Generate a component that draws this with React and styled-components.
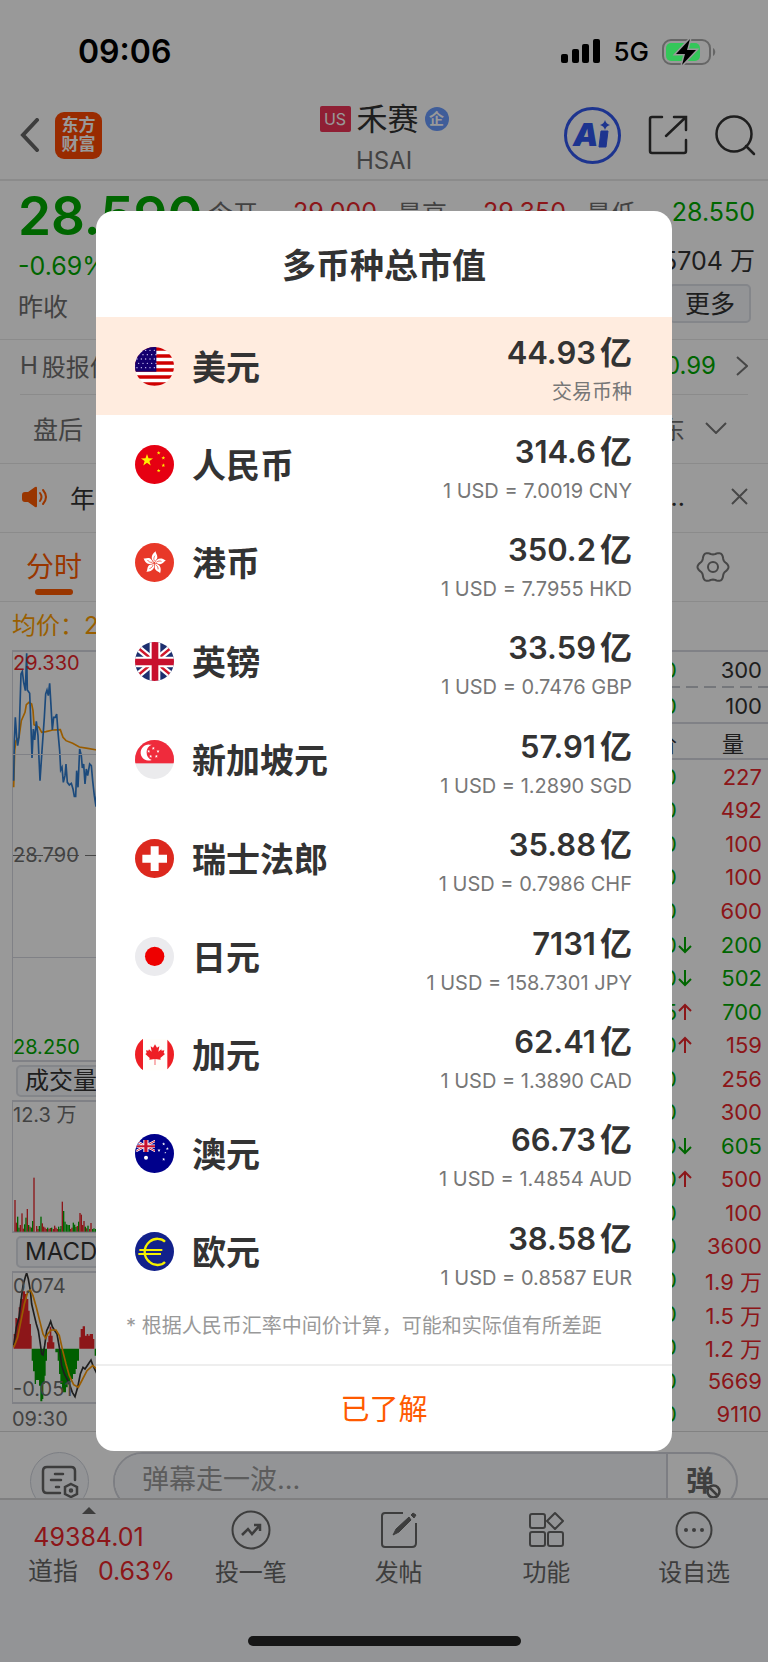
import React from 'react'
import styled, { createGlobalStyle } from 'styled-components'

const GlobalStyle = createGlobalStyle`
    * { box-sizing: border-box; }
    body {
        margin: 0;
        background: #fff;
        color: #333;
        font-family: Inter, "Noto Sans CJK SC", sans-serif;
        font-size: 24px;
    }
    button, input {
        font: inherit;
        color: inherit;
        padding: 0;
        margin: 0;
        border: 0;
        background: none;
    }
    svg { display: block; flex: none; }
`

const GREEN = '#00aa00';
const RED = '#e9262b';
const GREY = '#6f6f6f';
const BRAND = '#ff5a00';

const colors = { up: RED, down: GREEN, grey: GREY, dark: '#333' };

const Page = styled.div`
    position: relative;
    overflow: hidden;
`

const StatusBar = styled.div`
    position: relative;
    z-index: 2;
    display: flex;
    align-items: center;
    justify-content: space-between;
    height: 91px;
    padding: 12px 52px 0 78px;
    color: #000;
`

const Clock = styled.span`
    font-size: 32px;
    font-weight: 600;
`

const StatusIcons = styled.div`
    display: flex;
    align-items: center;
    gap: 13px;
    font-size: 26px;
    font-weight: 500;
`

const Header = styled.header`
    display: grid;
    grid-template-columns: 1fr auto 1fr;
    align-items: center;
    height: 90px;
    padding: 0 12px;
    border-bottom: 2px solid #e8e8e8;
`

const HeaderSide = styled.div`
    display: flex;
    align-items: center;
    gap: ${p => p.gap}px;
    padding-left: 8px;
    justify-content: ${p => p.end ? 'flex-end' : 'flex-start'};
`

const IconButton = styled.button`
    display: block;
`

const Logo = styled.div`
    width: 47px;
    height: 47px;
    padding-top: 4px;
    border-radius: 9px;
    background: #ff4800;
    color: #fff;
    font-size: 17px;
    font-weight: 700;
    line-height: 19px;
    text-align: center;
`

const Title = styled.div`
    align-self: end;
    display: grid;
    gap: 6px;
    justify-items: center;
    line-height: 36px;
    color: ${GREY};
`

const TitleRow = styled.h1`
    display: flex;
    align-items: center;
    gap: 6px;
    margin: 0;
    font-size: 31px;
    font-weight: 400;
    color: #333;
`

const Market = styled.span`
    width: 31px;
    height: 26px;
    border-radius: 2px;
    background: #ee3458;
    color: #fff;
    font-size: 16px;
    line-height: 27px;
    text-align: center;
`

const Verified = styled.span`
    width: 24px;
    height: 24px;
    border-radius: 50%;
    background: #6a9bff;
    color: #fff;
    font-size: 15px;
    font-weight: 700;
    line-height: 23px;
    text-align: center;
`

const Quote = styled.section`
    display: grid;
    grid-template-columns: 190px 1fr;
    height: 159px;
    padding: 0 13px 0 18px;
    border-bottom: 1px solid #e8e8e8;
`

const LastPrice = styled.div`
    padding-top: 5px;
    color: ${GREEN};
    font-size: 25px;
    line-height: 41px;
    white-space: nowrap;

    strong {
        display: block;
        font-size: 53px;
        font-weight: 600;
        line-height: 60px;
    }
    small {
        display: block;
        color: ${GREY};
        font-size: 25px;
    }
`

const Stats = styled.div`
    display: grid;
    grid-template-columns: repeat(3, 1fr);
    grid-template-rows: 44px 50px 40px;
    column-gap: 20px;
    padding-top: 9px;
`

const Stat = styled.div`
    display: flex;
    align-items: center;
    justify-content: space-between;
    font-size: 25px;
    color: ${p => colors[p.tone]};

    span { color: ${GREY}; }
`

const MoreButton = styled.button`
    grid-column: 3;
    justify-self: end;
    width: 82px;
    height: 39px;
    margin-right: 4px;
    border: 2px solid #dcdfe6;
    border-radius: 5px;
    background: #f5f7fa;
    font-size: 25px;
    line-height: 34px;
`

const Row = styled.div`
    display: flex;
    align-items: center;
    height: ${p => p.h}px;
    padding: 0 ${p => p.right}px 3px ${p => p.left}px;
    border-bottom: 1px solid #e8e8e8;
    font-size: 25px;
    color: ${p => colors[p.tone || 'grey']};
`

const InsetRow = styled(Row)`
    margin: 0 20px;
    font-size: 24px;
`

const Spacer = styled.span`
    flex: 1;
`

const RowGroup = styled.span`
    display: flex;
    align-items: center;
    gap: ${p => p.gap}px;
    color: ${p => colors[p.tone]};
`

const TabRow = styled(Row)`
    padding-bottom: 0;
`

const Tab = styled.button`
    position: relative;
    height: 68px;
    padding-bottom: 4px;
    color: ${BRAND};
    font-size: 28px;

    &::after {
        content: '';
        position: absolute;
        left: 9px;
        right: 9px;
        bottom: 6px;
        height: 6px;
        border-radius: 3px;
        background: ${BRAND};
    }
`

const Average = styled.div`
    padding-left: 12px;
    height: 48px;
    color: #ff9f00;
    font-size: 24px;
    line-height: 48px;
`

const Board = styled.section`
    display: grid;
    grid-template-columns: 1fr 208px;
    border-bottom: 1px solid #d9d9d9;
`

const Charts = styled.div`
    padding-left: 12px;
`

const Frame = styled.div`
    position: relative;
    height: ${p => p.h}px;
    border: solid #d5d8e0;
    border-width: 2px 0 2px 1px;
`

const GridLine = styled.hr`
    position: absolute;
    left: 0;
    right: 0;
    top: ${p => p.top}px;
    height: 1px;
    margin: 0;
    border: 0;
    background: ${p => p.dashed ? 'repeating-linear-gradient(90deg, #777 0 12px, transparent 12px 18px)' : '#d5d8e0'};
`

const Label = styled.span`
    position: absolute;
    left: 0;
    ${p => p.at}
    color: ${p => colors[p.tone || 'grey']};
    font-size: 20px;
    line-height: 22px;
`

const IndicatorRow = styled.div`
    display: flex;
    align-items: center;
    height: 38px;
    padding-left: 4px;
`

const Indicator = styled.button`
    height: 32px;
    padding: 0 7px;
    border: 2px solid #dcdfe6;
    border-radius: 5px;
    background: #f5f7fa;
    font-size: 24px;
    line-height: 26px;
`

const TimeAxis = styled.div`
    height: 27px;
    color: ${GREY};
    font-size: 20px;
    line-height: 30px;
`

const Book = styled.div`
    display: flex;
    flex-direction: column;
    font-size: 22px;
    border-top: 2px solid #d5d8e0;
`

const BookRow = styled.div`
    display: grid;
    grid-template-columns: 1fr 15px 70px;
    align-items: center;
    height: 36px;
    padding-right: 6px;
    text-align: right;
    background: ${p => p.line || 'none'} bottom / 100% 2px no-repeat;
`

const BookHead = styled(BookRow)`
    padding-right: 24px;
    grid-template-columns: 1fr 15px 52px;
`

const Ticks = styled.div`
    display: grid;
    flex: 1;
    grid-auto-rows: 1fr;

    ${BookRow} { height: auto; }
`

const Tone = styled.span`
    color: ${p => colors[p.tone]};
`

const Chat = styled.div`
    display: flex;
    gap: 24px;
    height: 66px;
    padding: 20px 30px 0;
    overflow: hidden;
    color: #6a6a6a;
`

const ChatSettings = styled.button`
    display: grid;
    place-items: center;
    flex: none;
    width: 59px;
    height: 59px;
    border: 1px solid #cfd3dc;
    border-radius: 50%;
    background: #f5f7fa;
`

const ChatBox = styled.div`
    display: flex;
    flex: 1;
    height: 59px;
    border: 2px solid #d0d3da;
    border-radius: 30px;
    overflow: hidden;
`

const ChatInput = styled.input`
    flex: 1;
    min-width: 0;
    height: 51px;
    padding-left: 27px;
    background: #f5f7fa;
    box-shadow: 0 10px 0 #f5f7fa;
    font-size: 27px;
    outline: none;

    &::placeholder { color: #999; opacity: 1; }
`

const Danmu = styled.button`
    position: relative;
    width: 70px;
    padding: 0 4px 6px 0;
    border-left: 2px solid #d0d3da;
    font-size: 28px;
    font-weight: 700;

    svg {
        position: absolute;
        left: 37px;
        top: 29px;
    }
`

const TabBar = styled.nav`
    display: grid;
    grid-template-columns: 177px repeat(4, 1fr);
    height: 164px;
    border-top: 2px solid #d4d4d6;
    background: #f5f7fa;
    color: #666;
`

const NavItem = styled.button`
    display: grid;
    justify-items: center;
    align-content: start;
    gap: 5px;
    padding-top: 10px;
    font-size: 24px;
    line-height: 36px;
`

const IndexItem = styled.button`
    display: grid;
    justify-items: center;
    align-content: start;
    padding-top: 7px;
    color: ${RED};
    font-size: 25px;
    line-height: 34px;
    white-space: nowrap;

    svg { margin-bottom: 6px; }
    em {
        font-style: normal;
        margin: 0 20px 0 26px;
        color: #666;
    }
`

const HomeBar = styled.div`
    position: absolute;
    left: 50%;
    bottom: 16px;
    width: 273px;
    height: 10px;
    margin-left: -136px;
    border-radius: 5px;
    background: #252525;
`

const Overlay = styled.div`
    position: absolute;
    inset: 0;
    z-index: 1;
    display: flex;
    align-items: center;
    justify-content: center;
    background: rgba(0, 0, 0, 0.4);
`

const Dialog = styled.div`
    width: 75%;
    border-radius: 18px;
    background: #fff;
    overflow: hidden;
`

const DialogTitle = styled.h2`
    margin: 0;
    padding-top: 4px;
    font-size: 34px;
    font-weight: 700;
    line-height: 102px;
    text-align: center;
`

const CurrencyList = styled.ul`
    display: grid;
    grid-auto-rows: 1fr;
    height: 984px;
    margin: 0;
    padding: 0;
    list-style: none;
`

const Currency = styled.li`
    display: flex;
    align-items: center;
    gap: 18px;
    padding: 0 40px 0 39px;
    background: ${p => p.active ? '#ffecdf' : '#fff'};
`

const CurrencyName = styled.span`
    flex: 1;
    padding-bottom: 2px;
    font-size: 34px;
    font-weight: 700;
`

const Amount = styled.div`
    padding-top: 6px;
    text-align: right;
`

const Value = styled.div`
    display: flex;
    justify-content: flex-end;
    gap: 4px;
    font-size: 31px;
    font-weight: 600;
    line-height: 40px;

    span { font-weight: 700; font-size: 32px; }
`

const Rate = styled.div`
    margin-top: 6px;
    color: #777;
    font-size: 20px;
    line-height: 26px;
`

const Note = styled.p`
    margin: 0;
    padding-left: 30px;
    height: 63px;
    color: #999;
    font-size: 20px;
    line-height: 50px;
`

const Confirm = styled.button`
    display: block;
    width: 100%;
    height: 87px;
    padding-bottom: 3px;
    border-top: 2px solid #eee;
    color: ${BRAND};
    font-size: 29px;
`

const star = (cx, cy, r) => {
    const pts = [];
    for (let i = 0; i < 10; i++) {
        const a = Math.PI / 5 * i - Math.PI / 2;
        const d = i % 2 ? r * 0.4 : r;
        pts.push(`${cx + d * Math.cos(a)},${cy + d * Math.sin(a)}`);
    }
    return pts.join(' ');
}

const gearPoints = () => {
    const pts = [];
    for (let i = 0; i < 72; i++) {
        const a = Math.PI / 36 * i;
        const d = 14 + 1.5 * Math.cos(6 * a);
        pts.push(`${17 + d * Math.cos(a)},${17 + d * Math.sin(a)}`);
    }
    return pts.join(' ');
}

const unionJack = (
    <>
        <path d="M-5 6L122 111M122 6L-5 111" stroke="#fff" strokeWidth="20" />
        <path d="M-5 6L122 111M122 6L-5 111" stroke="#d0182c" strokeWidth="7" />
        <path d="M60 0V117M0 60H117" stroke="#fff" strokeWidth="32" />
        <path d="M60 0V117M0 60H117" stroke="#c8102e" strokeWidth="20" />
    </>
)

//every flag is drawn on a 117 x 117 box and cut to a circle
const flags = {
    US: (
        <>
            <rect width="117" height="117" fill="#fff" />
            <path d="M0 6H117M0 27H117M0 48H117M0 69H117M0 90H117M0 111H117" stroke="#cf0000" strokeWidth="10" />
            <rect width="64" height="74" fill="#14006e" />
            {[...Array(25)].map((_, i) => (
                <circle key={i} cx={6 + (i % 5) * 13 + (Math.floor(i / 5) % 2) * 5} cy={10 + Math.floor(i / 5) * 13} r="2" fill="#dcd8ff" />
            ))}
        </>
    ),
    CN: (
        <>
            <rect width="117" height="117" fill="#e60012" />
            <polygon points={star(36, 46, 19)} fill="#fff100" />
            <polygon points={star(71, 24, 6)} fill="#fff100" />
            <polygon points={star(85, 39, 6)} fill="#fff100" />
            <polygon points={star(85, 61, 6)} fill="#fff100" />
            <polygon points={star(71, 77, 6)} fill="#fff100" />
        </>
    ),
    HK: (
        <>
            <rect width="117" height="117" fill="#e83828" />
            {[0, 72, 144, 216, 288].map(a => (
                <g key={a} transform={`rotate(${a} 58 60)`}>
                    <path d="M58 58C48 51 46 36 62 25C61 30 68 36 67 44C66 50 60 52 58 58Z" fill="#fff" />
                    <path d="M58 54C55 47 57 42 60 38" stroke="#e83828" strokeWidth="2" fill="none" />
                </g>
            ))}
        </>
    ),
    GB: (
        <>
            <rect width="117" height="117" fill="#1d2f6f" />
            {unionJack}
        </>
    ),
    SG: (
        <>
            <rect width="117" height="117" fill="#ebebed" />
            <rect width="117" height="70" fill="#ef2b3c" />
            <path d="M44 14A24 24 0 1 0 50 60A25 25 0 0 1 50 14Z" fill="#fff" />
            <polygon points={star(55, 25, 5)} fill="#fff" />
            <polygon points={star(41, 34, 5)} fill="#fff" />
            <polygon points={star(69, 34, 5)} fill="#fff" />
            <polygon points={star(47, 49, 5)} fill="#fff" />
            <polygon points={star(64, 49, 5)} fill="#fff" />
        </>
    ),
    CH: (
        <>
            <rect width="117" height="117" fill="#dc281e" />
            <path d="M59 22V96M22 59H96" stroke="#fff" strokeWidth="24" />
        </>
    ),
    JP: (
        <>
            <rect width="117" height="117" fill="#ebebee" />
            <circle cx="59" cy="58" r="29" fill="#ee0000" />
        </>
    ),
    CA: (
        <>
            <rect y="12" width="117" height="94" fill="#fffefa" />
            <path d="M0 12H24V106H0ZM97 12H117V106H97Z" fill="#ee1f25" />
            <path d="M60 28L66 38L73 34L70 50L79 43L80 47L88 46L86 54L90 57L76 69L77 74L61 72V90H59V72L43 74L44 69L31 57L35 54L33 46L40 47L42 43L50 50L47 34L54 38Z" fill="#ee1f25" />
        </>
    ),
    AU: (
        <>
            <rect width="117" height="117" fill="#00008b" />
            <svg x="4" y="18" width="56" height="36" viewBox="0 0 117 117" preserveAspectRatio="none">{unionJack}</svg>
            <circle cx="33" cy="71" r="6" fill="#fff" />
            <polygon points={star(86, 30, 5)} fill="#fff" />
            <polygon points={star(97, 44, 5)} fill="#fff" />
            <polygon points={star(72, 49, 5)} fill="#fff" />
            <polygon points={star(91, 56, 3)} fill="#fff" />
            <polygon points={star(86, 76, 5)} fill="#fff" />
        </>
    ),
    EU: (
        <>
            <rect width="117" height="117" fill="#12218b" />
            <path d="M90 29C80 18 58 17 44 29C24 46 24 74 44 90C58 103 80 101 90 90" stroke="#f5f000" strokeWidth="7" fill="none" />
            <path d="M13 54H82M10 66H78" stroke="#f5f000" strokeWidth="6" />
        </>
    ),
};

const Flag = ({ code }) => (
    <svg width="39" height="39" viewBox="0 0 117 117" aria-hidden="true">
        <clipPath id={`flag-${code}`}><circle cx="58.5" cy="58.5" r="58.5" /></clipPath>
        <g clipPath={`url(#flag-${code})`}>{flags[code]}</g>
    </svg>
)

const currencies = [
    { flag: 'US', name: '美元', value: '44.93', rate: '交易币种', active: true },
    { flag: 'CN', name: '人民币', value: '314.6', rate: '1 USD = 7.0019 CNY' },
    { flag: 'HK', name: '港币', value: '350.2', rate: '1 USD = 7.7955 HKD' },
    { flag: 'GB', name: '英镑', value: '33.59', rate: '1 USD = 0.7476 GBP' },
    { flag: 'SG', name: '新加坡元', value: '57.91', rate: '1 USD = 1.2890 SGD' },
    { flag: 'CH', name: '瑞士法郎', value: '35.88', rate: '1 USD = 0.7986 CHF' },
    { flag: 'JP', name: '日元', value: '7131', rate: '1 USD = 158.7301 JPY' },
    { flag: 'CA', name: '加元', value: '62.41', rate: '1 USD = 1.3890 CAD' },
    { flag: 'AU', name: '澳元', value: '66.73', rate: '1 USD = 1.4854 AUD' },
    { flag: 'EU', name: '欧元', value: '38.58', rate: '1 USD = 0.8587 EUR' },
];

//price, direction arrow, volume, volume colour
const ticks = [
    ['0', '', '227', 'up'],
    ['0', '', '492', 'up'],
    ['0', '', '100', 'up'],
    ['0', '', '100', 'up'],
    ['0', '', '600', 'up'],
    ['0', 'down', '200', 'down'],
    ['0', 'down', '502', 'down'],
    ['5', 'up', '700', 'down'],
    ['0', 'up', '159', 'up'],
    ['0', '', '256', 'up'],
    ['0', '', '300', 'up'],
    ['0', 'down', '605', 'down'],
    ['0', 'up', '500', 'up'],
    ['0', '', '100', 'up'],
    ['0', '', '3600', 'up'],
    ['0', '', '1.9 万', 'up'],
    ['0', '', '1.5 万', 'up'],
    ['0', '', '1.2 万', 'up'],
    ['0', '', '5669', 'up'],
    ['0', '', '9110', 'up'],
];

//x, top, colour
const volumes = [
    [42, 475, 1], [46, 543, 1], [50, 525, 0], [54, 558, 0], [58, 550, 1], [63, 515, 1], [67, 561, 1],
    [71, 548, 0], [75, 528, 0], [79, 502, 1], [83, 550, 0], [87, 555, 1], [91, 558, 0], [95, 538, 0],
    [99, 408, 1], [107, 553, 1], [111, 562, 1], [115, 553, 0], [120, 525, 0], [124, 545, 1], [128, 555, 1],
    [132, 558, 1], [136, 562, 1], [140, 558, 0], [144, 562, 1], [148, 559, 1], [152, 558, 0], [157, 562, 1],
    [161, 552, 1], [165, 558, 1], [169, 562, 1], [173, 555, 0], [177, 562, 0], [180, 553, 0], [184, 480, 1],
    [188, 508, 0], [192, 540, 0], [197, 548, 0], [201, 550, 0], [205, 550, 0], [209, 562, 1], [213, 558, 1],
    [217, 543, 0], [221, 549, 0], [225, 556, 0], [229, 553, 1], [233, 540, 0], [237, 514, 1], [241, 519, 1],
    [245, 550, 1], [249, 538, 1], [253, 555, 0], [257, 560, 1], [261, 552, 0], [266, 562, 1], [270, 544, 1],
    [275, 562, 0], [279, 560, 0], [284, 562, 0],
];

const PriceChart = () => (
    <svg width="84" height="136" viewBox="36 34 252 408" fill="none" overflow="visible">
        <path d="M38 440L41 330L45 300L54 290L61 240L72 215L76 192L84 185L92 190L96 210L99 252L114 260L122 275L135 273L155 268L178 267L186 290L195 300L215 308L235 319L260 323L288 328" stroke="#ff9a00" strokeWidth="5" />
        <path d="M38 420L40 300L43 230L47 290L50 315L54 290L60 100L64 92L68 125L73 150L77 38L79 148L86 158L90 260L93 352L97 265L101 298L106 242L111 285L117 420L123 330L130 230L134 160L138 148L142 165L146 128L150 195L154 268L158 230L163 230L167 220L171 275L176 330L179 388L183 380L187 425L192 405L195 370L199 425L205 433L211 428L216 445L220 467L224 467L227 390L231 440L236 325L241 345L244 382L248 370L252 430L256 385L260 405L266 370L271 375L275 420L280 465L285 498L288 430" stroke="#2f7ccf" strokeWidth="5" />
    </svg>
)

const VolumeChart = () => (
    <svg width="84" height="130" viewBox="36 181 252 390">
        {volumes.map(([x, top, up]) => (
            <rect key={x} x={x - 2} y={top} width="4" height={570 - top} fill={up ? RED : GREEN} />
        ))}
    </svg>
)

const MacdChart = () => (
    <svg width="84" height="130" viewBox="36 697 252 390" fill="none">
        <path d="M38 924V880H43V832H49V836H53V800H58V775H65V752H72V760H78V775H82V810H86V850H90V885H92V924ZM138 924V905H142V885H146V858H151V885H155V905H160V924ZM235 924V890H239V865H245V857H252V885H257V880H262V885H266V880H276V895H280V924Z" fill={RED} />
        <path d="M92 924V960H96V992H101V1030H105V1018H114V1035H118V1082H124V1075H127V1030H131V1005H134V960H138V924ZM163 924V935H170V960H174V1000H178V1030H183V1055H195V1040H200V1025H208V1015H216V1000H224V985H228V960H234V924ZM281 924V945H285V950H288V924Z" fill="#009f00" />
        <path d="M38 915L46 860L54 830L60 780L66 735L74 705L77 697L82 715L88 750L92 790L100 825L106 850L112 870L118 910L122 940L126 943L131 915L137 870L144 855L149 842L154 858L160 868L168 880L176 925L182 975L190 1000L200 1018L208 1038L214 1055L222 1068L230 1040L238 1000L246 980L252 985L262 970L270 958L276 975L288 1000" stroke="#333" strokeWidth="5" />
        <path d="M38 920L50 890L62 830L70 790L80 755L88 748L96 765L106 800L116 840L126 880L134 893L140 880L150 868L165 868L175 885L185 930L195 970L205 1005L218 1032L232 1040L245 1015L258 990L275 975L288 985" stroke="#ff9a00" strokeWidth="5" />
    </svg>
)

const Arrow = ({ dir }) => (
    <svg width="15" height="20" viewBox="0 0 15 20" fill="none" stroke={colors[dir]} strokeWidth="2">
        {dir === 'up' && <path d="M8 18V4M2 9L8 3L14 9" />}
        {dir === 'down' && <path d="M8 2V16M2 11L8 17L14 11" />}
    </svg>
)

const Status = () => (
    <StatusBar>
        <Clock>09:06</Clock>
        <StatusIcons>
            <svg width="39" height="25" viewBox="0 0 39 25">
                <rect x="0" y="15" width="7" height="9" rx="2" />
                <rect x="11" y="10" width="7" height="14" rx="2" />
                <rect x="21" y="5" width="7" height="19" rx="2" />
                <rect x="32" y="0" width="7" height="24" rx="2" />
            </svg>
            5G
            <svg width="54" height="28" viewBox="0 0 54 28">
                <rect x="1" y="2" width="47" height="24" rx="8" fill="none" stroke="#666" strokeWidth="2" />
                <rect x="4" y="5" width="34" height="18" rx="5" fill="#34c759" />
                <path d="M51 10C54 12 54 16 51 18Z" fill="#666" />
                <path d="M28 1L14 16H23L20 27L34 12H25Z" stroke="#999" strokeWidth="3" />
                <path d="M28 1L14 16H23L20 27L34 12H25Z" />
            </svg>
        </StatusIcons>
    </StatusBar>
)

const TopBar = () => (
    <Header>
        <HeaderSide gap={15}>
            <IconButton aria-label="返回">
                <svg width="20" height="34" viewBox="0 0 20 34" fill="none" stroke="#666" strokeWidth="4" strokeLinecap="round"><path d="M17 2L3 17L17 32" /></svg>
            </IconButton>
            <Logo>东方<br />财富</Logo>
        </HeaderSide>
        <Title>
            <TitleRow><Market>US</Market>禾赛<Verified>企</Verified></TitleRow>
            HSAI
        </Title>
        <HeaderSide gap={27} end>
            <IconButton aria-label="Ai">
                <svg width="57" height="57" viewBox="0 0 57 57" fill="#3158ee">
                    <circle cx="28.5" cy="28.5" r="27" fill="none" stroke="#3158ee" strokeWidth="3" />
                    <text x="9" y="39" fontSize="32" fontWeight="900" fontStyle="italic" fontFamily="Inter">A</text>
                    <path d="M37 24H44L42 40H35Z" stroke="#3158ee" strokeLinejoin="round" />
                    <path d="M41 13Q42 17 46 18Q42 19 41 23Q40 19 36 18Q40 17 41 13Z" />
                </svg>
            </IconButton>
            <IconButton aria-label="分享">
                <svg width="40" height="40" viewBox="0 0 40 40" fill="none" stroke="#333" strokeWidth="2.5" strokeLinecap="round">
                    <path d="M14 2H4Q2 2 2 4V36Q2 38 4 38H36Q38 38 38 36V25M26 2H38V15M38 2L18 21" />
                </svg>
            </IconButton>
            <IconButton aria-label="搜索">
                <svg width="41" height="41" viewBox="0 0 41 41" fill="none" stroke="#333" strokeWidth="2.5" strokeLinecap="round">
                    <circle cx="19" cy="19" r="17.5" /><path d="M31 31L39 39" />
                </svg>
            </IconButton>
        </HeaderSide>
    </Header>
)

const CurrencyDialog = () => (
    <Overlay>
        <Dialog role="dialog" aria-labelledby="dialog-title">
            <DialogTitle id="dialog-title">多币种总市值</DialogTitle>
            <CurrencyList>
                {currencies.map(c => (
                    <Currency key={c.flag} active={c.active ? 1 : 0}>
                        <Flag code={c.flag} />
                        <CurrencyName>{c.name}</CurrencyName>
                        <Amount>
                            <Value>{c.value}<span>亿</span></Value>
                            <Rate>{c.rate}</Rate>
                        </Amount>
                    </Currency>
                ))}
            </CurrencyList>
            <Note>* 根据人民币汇率中间价计算，可能和实际值有所差距</Note>
            <Confirm>已了解</Confirm>
        </Dialog>
    </Overlay>
)

const App = () => (
    <Page>
        <GlobalStyle />
        <Status />
        <TopBar />
        <Quote>
            <LastPrice><strong>28.590</strong>-0.69%<small>昨收</small></LastPrice>
            <Stats>
                <Stat tone="up"><span>今开</span>29.000</Stat>
                <Stat tone="up"><span>最高</span>29.350</Stat>
                <Stat tone="down"><span>最低</span>28.550</Stat>
                <div /><div />
                <Stat tone="dark"><span />5704 万</Stat>
                <MoreButton>更多</MoreButton>
            </Stats>
        </Quote>
        <InsetRow h={55} left={0} right={0}>
            <RowGroup tone="grey" gap={4}><span>H</span>股报价</RowGroup>
            <Spacer />
            <RowGroup tone="down" gap={20}>
                0.99
                <svg width="12" height="20" viewBox="0 0 12 20" fill="none" stroke="#777" strokeWidth="2"><path d="M1 1L11 10L1 19" /></svg>
            </RowGroup>
        </InsetRow>
        <Row h={69} left={33} right={41}>
            盘后<Spacer />
            <RowGroup tone="grey" gap={20}>
                东
                <svg width="22" height="12" viewBox="0 0 22 12" fill="none" stroke="#777" strokeWidth="2"><path d="M1 1L11 11L21 1" /></svg>
            </RowGroup>
        </Row>
        <Row h={69} left={22} right={20} tone="dark">
            <svg width="48" height="22" viewBox="0 0 48 22" fill={BRAND}>
                <path d="M3 6H6L13 1Q15 0 15 2V20Q15 22 13 21L6 16H3Q0 16 0 13V9Q0 6 3 6Z" />
                <path d="M18 7Q21 11 18 15M21 4Q27 11 21 18" fill="none" stroke={BRAND} strokeWidth="2" strokeLinecap="round" />
            </svg>
            年<Spacer />
            <RowGroup tone="dark" gap={46}>
                ...
                <svg width="17" height="17" viewBox="0 0 17 17" stroke="#777" strokeWidth="2"><path d="M1 1L16 16M16 1L1 16" /></svg>
            </RowGroup>
        </Row>
        <TabRow h={69} left={26} right={38}>
            <Tab>分时</Tab><Spacer />
            <IconButton aria-label="设置">
                <svg width="34" height="34" viewBox="0 0 34 34" fill="none" stroke="#777" strokeWidth="2">
                    <polygon points={gearPoints()} strokeLinejoin="round" /><circle cx="17" cy="17" r="5" />
                </svg>
            </IconButton>
        </TabRow>
        <Average>均价：2</Average>
        <Board>
            <Charts>
                <Frame h={412}>
                    <GridLine top={102} />
                    <GridLine top={203} dashed />
                    <GridLine top={305} />
                    <PriceChart />
                    <Label at="top: 0;" tone="up">29.330</Label>
                    <Label at="top: 192px;">28.790</Label>
                    <Label at="bottom: 2px;" tone="down">28.250</Label>
                </Frame>
                <IndicatorRow><Indicator>成交量</Indicator></IndicatorRow>
                <Frame h={133}>
                    <VolumeChart />
                    <Label at="top: 2px;">12.3 万</Label>
                </Frame>
                <IndicatorRow><Indicator>MACD</Indicator></IndicatorRow>
                <Frame h={133}>
                    <MacdChart />
                    <Label at="top: 2px;">0.074</Label>
                    <Label at="bottom: 2px;">-0.051</Label>
                </Frame>
                <TimeAxis>09:30</TimeAxis>
            </Charts>
            <Book>
                <BookRow line="repeating-linear-gradient(90deg, #c3c6ce 0 12px, transparent 12px 18px)">
                    <Tone tone="down">0</Tone><i /><span>300</span>
                </BookRow>
                <BookRow line="linear-gradient(#d5d8e0, #d5d8e0)">
                    <Tone tone="down">0</Tone><i /><span>100</span>
                </BookRow>
                <BookHead line="linear-gradient(#d5d8e0, #d5d8e0)">
                    <span>价</span><i /><span>量</span>
                </BookHead>
                <Ticks>
                    {ticks.map(([price, dir, volume, tone], i) => (
                        <BookRow key={i}>
                            <Tone tone="down">{price}</Tone>
                            <Arrow dir={dir} />
                            <Tone tone={tone}>{volume}</Tone>
                        </BookRow>
                    ))}
                </Ticks>
            </Book>
        </Board>
        <Chat>
            <ChatSettings aria-label="弹幕设置">
                <svg width="38" height="34" viewBox="0 0 38 34" fill="none" stroke="#666" strokeWidth="2.5" strokeLinecap="round">
                    <path d="M19 28H6Q2 28 2 24V6Q2 2 6 2H30Q34 2 34 6V15M14 9H22M10 15H20M15 22H18" />
                    <path d="M30 19L36 22V29L30 32L24 29V22Z" /><circle cx="30" cy="25.5" r="1" />
                </svg>
            </ChatSettings>
            <ChatBox>
                <ChatInput placeholder="弹幕走一波..." aria-label="弹幕" />
                <Danmu>
                    弹
                    <svg width="17" height="17" viewBox="0 0 17 17" fill="#fff" stroke="#666" strokeWidth="2.5"><circle cx="8.5" cy="8.5" r="6" /><path d="M5 5L12 12" /></svg>
                </Danmu>
            </ChatBox>
        </Chat>
        <TabBar>
            <IndexItem>
                <svg width="14" height="7" viewBox="0 0 14 7" fill="#666"><path d="M7 0L14 7H0Z" /></svg>
                <span>49384.01</span>
                <span><em>道指</em>0.63%</span>
            </IndexItem>
            <NavItem>
                <svg width="40" height="40" viewBox="0 0 40 40" fill="none" stroke="#666" strokeWidth="2">
                    <circle cx="20" cy="20" r="18.5" />
                    <path d="M11 25L17 19L21 24L29 15M23 15H29V21" strokeWidth="2.5" />
                </svg>
                投一笔
            </NavItem>
            <NavItem>
                <svg width="40" height="40" viewBox="0 0 40 40" fill="none" stroke="#666" strokeWidth="2">
                    <path d="M24 3H6Q3 3 3 6V34Q3 37 6 37H33Q37 37 37 33V13" />
                    <path d="M14 25L17 19L30 7L32 10L20 22ZM32 5L34 3L37 5L35 8Z" fill="#666" strokeWidth="1" />
                </svg>
                发帖
            </NavItem>
            <NavItem>
                <svg width="40" height="40" viewBox="0 0 40 40" fill="none" stroke="#666" strokeWidth="2">
                    <rect x="4" y="4" width="15" height="14" rx="2" />
                    <rect x="4" y="22" width="15" height="14" rx="2" />
                    <rect x="22" y="22" width="15" height="14" rx="2" />
                    <path d="M29 3L37 11L29 19L21 11Z" strokeLinejoin="round" />
                </svg>
                功能
            </NavItem>
            <NavItem>
                <svg width="40" height="40" viewBox="0 0 40 40" fill="#666">
                    <circle cx="20" cy="20" r="17.5" fill="none" stroke="#666" strokeWidth="2" />
                    <circle cx="12" cy="20" r="2" /><circle cx="20" cy="20" r="2" /><circle cx="28" cy="20" r="2" />
                </svg>
                设自选
            </NavItem>
        </TabBar>
        <HomeBar />
        <CurrencyDialog />
    </Page>
)

export default App
